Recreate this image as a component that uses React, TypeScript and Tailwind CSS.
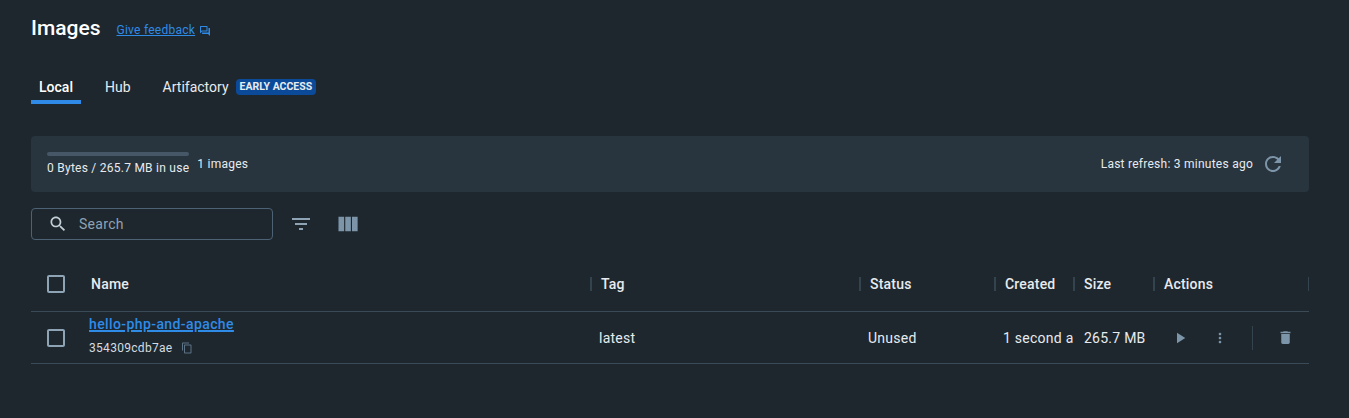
const font = { fontFamily: 'Roboto, sans-serif' }

function Icon({ d, className }: { d: string; className: string }) {
  return (
    <svg viewBox="0 0 24 24" fill="currentColor" className={className}>
      <path d={d} />
    </svg>
  )
}

const checkboxPath =
  'M19 5v14H5V5h14m0-2H5c-1.1 0-2 .9-2 2v14c0 1.1.9 2 2 2h14c1.1 0 2-.9 2-2V5c0-1.1-.9-2-2-2z'

function Checkbox() {
  return <Icon d={checkboxPath} className="h-6 w-6 text-[#8ea3b4]" />
}

function HeaderCell({ label, width }: { label: string; width: string }) {
  return (
    <div className={`flex h-[14px] items-center border-l-2 border-[#33444f] pl-[9px] ${width}`}>
      <span className="text-sm font-medium tracking-[0.2px] text-[#e7ebee]">{label}</span>
    </div>
  )
}

export default function App() {
  return (
    <div
      className="h-[418px] w-[1349px] overflow-hidden bg-[#1e272e] pl-[31px] pr-[40px] pt-[15px]"
      style={font}
    >
      <div className="flex h-[28px] items-center">
        <h1 className="-mt-0.5 text-[21px] leading-7 font-medium text-white">Images</h1>
        <a className="ml-4 mt-0.5 text-xs tracking-[0.25px] text-[#2e8be8] underline">
          Give feedback
        </a>
        <Icon
          d="M15 4v7H5.17L4 12.17V4h11m1-2H3c-.55 0-1 .45-1 1v14l4-4h10c.55 0 1-.45 1-1V3c0-.55-.45-1-1-1zm5 4h-2v9H6v2c0 .55.45 1 1 1h11l4 4V7c0-.55-.45-1-1-1z"
          className="ml-1 mt-1 h-3 w-3 text-[#2e8be8]"
        />
      </div>

      <div className="mt-[17px] flex h-[44px] items-stretch text-sm">
        <div className="w-[50px] border-b-[4px] border-[#2e8ae6] pt-[17px] text-center leading-[20px] font-medium text-white">
          Local
        </div>
        <div className="ml-6 flex items-center pt-[10px] text-[#e7ebee]">Hub</div>
        <div className="ml-8 flex items-center pt-[10px] text-[#e7ebee]">
          Artifactory
          <span className="ml-[7px] rounded bg-[#0b4a99] px-1 py-0.5 text-[10.5px] leading-3 font-bold text-[#e7ebee]">
            EARLY ACCESS
          </span>
        </div>
      </div>

      <div className="mt-8 flex h-14 items-center justify-between rounded bg-[#28343e] pl-4 pr-6">
        <div className="flex items-center gap-2">
          <div>
            <div className="h-1 w-[142px] rounded-sm bg-[#465868]" />
            <div className="mt-1 text-xs leading-4 tracking-[0.25px] text-[#e7ebee]">
              0 Bytes / 265.7 MB in use
            </div>
          </div>
          <span className="-mt-px text-xs tracking-[0.25px] text-[#e7ebee]">1 images</span>
        </div>
        <div className="flex items-center gap-2">
          <span className="text-xs tracking-[0.25px] text-[#e7ebee]">
            Last refresh: 3 minutes ago
          </span>
          <Icon
            d="M17.65 6.35C16.2 4.9 14.21 4 12 4c-4.42 0-7.99 3.58-7.99 8s3.57 8 7.99 8c3.73 0 6.84-2.55 7.73-6h-2.08c-.82 2.33-3.04 4-5.65 4-3.31 0-6-2.69-6-6s2.69-6 6-6c1.66 0 3.14.69 4.22 1.78L13 11h7V4l-2.35 2.35z"
            className="h-6 w-6 text-[#7d95a9]"
          />
        </div>
      </div>

      <div className="mt-4 flex items-center">
        <div className="flex h-8 w-[242px] items-center rounded border border-[#4d6274] pl-4">
          <Icon
            d="M15.5 14h-.79l-.28-.27C15.41 12.59 16 11.11 16 9.5 16 5.91 13.09 3 9.5 3S3 5.91 3 9.5 5.91 16 9.5 16c1.61 0 3.09-.59 4.23-1.57l.27.28v.79l5 4.99L20.49 19l-4.99-5zm-6 0C7.01 14 5 11.99 5 9.5S7.01 5 9.5 5 14 7.01 14 9.5 11.99 14 9.5 14z"
            className="h-5 w-5 text-[#c3ced6]"
          />
          <span className="ml-[11px] text-sm tracking-[0.3px] text-[#8ea3b4]">Search</span>
        </div>
        <Icon
          d="M10 18h4v-2h-4v2zM3 6v2h18V6H3zm3 7h12v-2H6v2z"
          className="ml-4 h-6 w-6 text-[#8ea3b4]"
        />
        <Icon
          d="M10 18h5V5h-5v13zm-6 0h5V5H4v13zM16 5v13h5V5h-5z"
          className="ml-[21px] h-[27px] w-[27px] text-[#7d95a9]"
        />
      </div>

      <div className="mt-[20px] flex h-[52px] items-center border-b border-[#3a4a56] pb-[4px]">
        <div className="flex w-[50px] items-center pl-[13px]">
          <Checkbox />
        </div>
        <div className="w-[509px] pl-[10px] text-sm font-medium tracking-[0.2px] text-[#e7ebee]">
          Name
        </div>
        <HeaderCell label="Tag" width="w-[269px]" />
        <HeaderCell label="Status" width="w-[135px]" />
        <HeaderCell label="Created" width="w-[79px]" />
        <HeaderCell label="Size" width="w-[80px]" />
        <HeaderCell label="Actions" width="w-[155px]" />
        <div className="h-[14px] border-l border-[#33444f]" />
      </div>

      <div className="flex h-[52px] items-center border-b border-[#3a4a56] text-sm tracking-[0.25px] text-[#e7ebee]">
        <div className="flex w-[50px] items-center pl-[13px]">
          <Checkbox />
        </div>
        <div className="mb-[5px] w-[509px] pl-2">
          <a className="block text-sm leading-5 font-medium tracking-[0.4px] text-[#2e8be8] underline decoration-[1.5px]">
            hello-php-and-apache
          </a>
          <div className="mt-1.5 flex items-center">
            <span className="text-xs leading-4 tracking-[0.3px] text-[#d5dce1]">354309cdb7ae</span>
            <Icon
              d="M16 1H4c-1.1 0-2 .9-2 2v14h2V3h12V1zm3 4H8c-1.1 0-2 .9-2 2v14c0 1.1.9 2 2 2h11c1.1 0 2-.9 2-2V7c0-1.1-.9-2-2-2zm0 16H8V7h11v14z"
              className="ml-2 h-3 w-3 text-[#5d7386]"
            />
          </div>
        </div>
        <div className="w-[269px] pl-[9px]">latest</div>
        <div className="w-[135px] pl-[9px]">Unused</div>
        <div className="w-[79px] pl-[9px] whitespace-nowrap">1 second a</div>
        <div className="w-[80px] pl-[11px] whitespace-nowrap">265.7 MB</div>
        <div className="flex w-[155px] items-center pl-[18px]">
          <Icon d="M8 5v14l11-7z" className="h-[18px] w-[18px] text-[#7d95a9]" />
          <Icon
            d="M12 8c1.1 0 2-.9 2-2s-.9-2-2-2-2 .9-2 2 .9 2 2 2zm0 2c-1.1 0-2 .9-2 2s.9 2 2 2 2-.9 2-2-.9-2-2-2zm0 6c-1.1 0-2 .9-2 2s.9 2 2 2 2-.9 2-2-.9-2-2-2z"
            className="ml-[23px] h-4 w-4 text-[#7d95a9]"
          />
          <div className="ml-6 h-6 border-l border-[#33444f]" />
          <Icon
            d="M6 19c0 1.1.9 2 2 2h8c1.1 0 2-.9 2-2V7H6v12zM19 4h-3.5l-1-1h-5l-1 1H5v2h14V4z"
            className="ml-6 h-[17px] w-[17px] text-[#7d95a9]"
          />
        </div>
      </div>
    </div>
  )
}
